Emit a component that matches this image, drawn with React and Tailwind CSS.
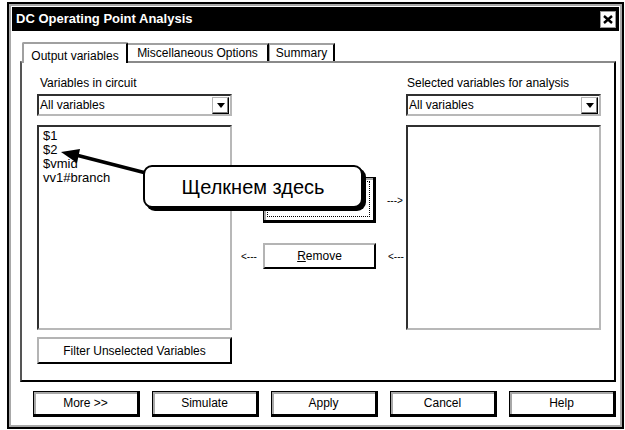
const raised = 'bg-white border-2 border-black border-t-[#b4b4b4] border-l-[#b4b4b4]'
const inset = 'bg-white border-2 border-[#b8b8b8] border-t-[#303030] border-l-[#303030]'

const DialogButton = ({ children }) => (
  <div className="w-[107px] h-[26px] flex items-center justify-center bg-white border border-black border-r-[3px] border-b-[3px] shadow-[inset_2px_2px_0_#a8a8a8] text-[12px]">
    {children}
  </div>
)

const Dropdown = () => (
  <div className={`${inset} h-[22px] flex items-center justify-between pl-[1px] pr-[1px]`}>
    <span className="text-[12px]">All variables</span>
    <div className="w-[17px] h-[17px] flex items-center justify-center border border-black border-t-[#b4b4b4] border-l-[#b4b4b4] shadow-[inset_-1px_-1px_0_#808080]">
      <svg width="8" height="5" viewBox="0 0 8 5">
        <polygon points="0,0 8,0 4,5" fill="#000" />
      </svg>
    </div>
  </div>
)

export default function App() {
  return (
    <div className="relative w-[625px] h-[430px] bg-white overflow-hidden text-black font-['Liberation_Sans',Arial,sans-serif]">
      <div className="ml-[7px] mt-[2px] w-[617px] h-[427px] border-2 border-black">
        <div className="h-full border-2 border-[#a8a8a8] p-[1px] flex flex-col">
          {/* title bar */}
          <div className="h-[24px] bg-black flex items-center justify-between pl-[4px] pr-[3px]">
            <span className="text-white font-bold text-[13px]">DC Operating Point Analysis</span>
            <div className="w-[16px] h-[17px] bg-white border border-[#9a9a9a] flex items-center justify-center">
              <svg width="10" height="9" viewBox="0 0 10 9">
                <path d="M1 1 L9 8 M9 1 L1 8" stroke="#000" strokeWidth="2.4" />
              </svg>
            </div>
          </div>

          {/* tabs */}
          <div className="mt-[11px] pl-[10px] flex items-end text-[12px]">
            <div className="relative z-10 -mb-[2px] w-[106px] h-[21px] bg-white border-t-2 border-l-2 border-r-2 border-[#a0a0a0] border-r-black rounded-t-[2px] flex items-start justify-center pt-[3px]">
              Output variables
            </div>
            <div className="w-[141px] h-[18px] border-t-2 border-r-2 border-[#a0a0a0] border-r-black flex items-center justify-center">
              Miscellaneous Options
            </div>
            <div className="w-[66px] h-[18px] border-t-2 border-l border-r-2 border-[#a0a0a0] border-r-black flex items-center justify-center">
              Summary
            </div>
          </div>

          {/* panel */}
          <div className="ml-[8px] w-[596px] h-[321px] border-2 border-black border-t-[#8a8a8a] border-l-[#555555] grid grid-cols-[195px_174px_195px] pl-[15px] pt-[13px]">
            <div className="flex flex-col">
              <div className="text-[12px] leading-[14px] pl-[3px]">Variables in circuit</div>
              <div className="mt-[4px]"><Dropdown /></div>
              <div className={`${inset} mt-[9px] h-[205px] pl-[4px] pt-[2px] text-[13px] leading-[14px]`}>
                <div>$1</div>
                <div>$2</div>
                <div>$vmid</div>
                <div>vv1#branch</div>
              </div>
              <div className={`${raised} mt-[7px] h-[27px] flex items-center justify-center text-[12px]`}>
                Filter Unselected Variables
              </div>
            </div>

            <div className="flex flex-col pt-[101px] text-[10px]">
              <div className="flex items-center pl-[31px]">
                <div className="w-[113px] h-[46px] bg-white border border-black border-r-[3px] border-b-[3px] shadow-[inset_2px_2px_0_#a8a8a8] p-[3px]">
                  <div className="h-full border border-dotted border-black" />
                </div>
                <span className="ml-[11px]">---&gt;</span>
              </div>
              <div className="flex items-center pl-[9px] mt-[20px]">
                <span className="w-[22px]">&lt;---</span>
                <div className={`${raised} w-[113px] h-[26px] flex items-center justify-center text-[12px]`}>
                  <span><span className="underline">R</span>emove</span>
                </div>
                <span className="ml-[12px]">&lt;---</span>
              </div>
            </div>

            <div className="flex flex-col">
              <div className="text-[12px] leading-[14px] pl-[1px]">Selected variables for analysis</div>
              <div className="mt-[4px]"><Dropdown /></div>
              <div className={`${inset} mt-[9px] h-[205px]`} />
            </div>
          </div>

          {/* bottom buttons */}
          <div className="mt-[9px] pl-[21px] flex gap-[12px]">
            <DialogButton>More &gt;&gt;</DialogButton>
            <DialogButton>Simulate</DialogButton>
            <DialogButton>Apply</DialogButton>
            <DialogButton>Cancel</DialogButton>
            <DialogButton>Help</DialogButton>
          </div>
        </div>
      </div>

      {/* callout pointing at $2 */}
      <svg className="absolute left-0 top-0 pointer-events-none" width="625" height="430">
        <line x1="146" y1="173" x2="76" y2="155" stroke="#000" strokeWidth="3.5" />
        <polygon points="61,152 80,149 77,163" fill="#000" />
      </svg>
      <div className="absolute left-[143px] top-[165px] w-[220px] h-[43px] rounded-[9px] border-2 border-black bg-white shadow-[3px_3px_0_#000] flex items-center justify-center text-[20px]">
        Щелкнем здесь
      </div>
    </div>
  )
}
